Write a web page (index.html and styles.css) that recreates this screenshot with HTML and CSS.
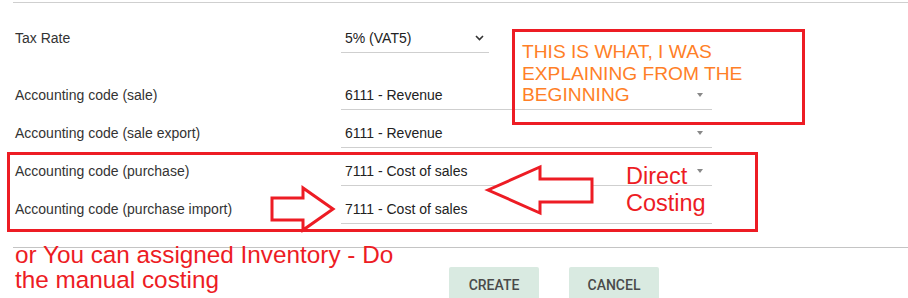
FILE: index.html
```html
<!DOCTYPE html>
<html lang="en">
<head>
    <meta charset="UTF-8">
    <title>Product accounting</title>
    <link rel="stylesheet" href="styles.css">
</head>
<body>
<div id="page">
    <div class="divider top"></div>

    <div class="form">
        <div class="row tax">
            <div class="label">Tax Rate</div>
            <div class="field short">
                <span>5% (VAT5)</span>
                <svg class="chevron" width="9" height="6" viewBox="0 0 9 6"><path d="M1 1 L4.5 4.5 L8 1" fill="none" stroke="#333" stroke-width="1.6"/></svg>
            </div>
        </div>
        <div class="row">
            <div class="label">Accounting code (sale)</div>
            <div class="field"><span>6111 - Revenue</span><i class="caret"></i></div>
        </div>
        <div class="row">
            <div class="label">Accounting code (sale export)</div>
            <div class="field"><span>6111 - Revenue</span><i class="caret"></i></div>
        </div>
        <div class="row">
            <div class="label">Accounting code (purchase)</div>
            <div class="field"><span>7111 - Cost of sales</span><i class="caret"></i></div>
        </div>
        <div class="row">
            <div class="label">Accounting code (purchase import)</div>
            <div class="field"><span>7111 - Cost of sales</span></div>
        </div>
    </div>

    <div class="divider bottom"></div>

    <div class="actions">
        <button class="flatButton">Create</button>
        <button class="flatButton">Cancel</button>
    </div>

    <!-- annotations drawn over the screenshot -->
    <div class="markBox note"></div>
    <p class="noteText orange">THIS IS WHAT, I WAS<br>EXPLAINING FROM THE<br>BEGINNING</p>
    <div class="markBox purchase"></div>
    <svg class="arrows" width="908" height="298" viewBox="0 0 908 298">
        <polygon points="272,198 303,198 303,188 333,209 303,230 303,220 272,220" fill="#fff" stroke="#ed1c24" stroke-width="3"/>
        <polygon points="488,190 540,167 540,179 592,179 592,202 540,202 540,213" fill="#fff" stroke="#ed1c24" stroke-width="3"/>
    </svg>
    <p class="noteText direct">Direct<br>Costing</p>
    <p class="noteText manual">or You can assigned Inventory - Do<br>the manual costing</p>
</div>
</body>
</html>
```

FILE: styles.css
```css
body {
    margin: 0;
    padding: 0;
    background-color: #fff;
    font-family: 'Liberation Sans', Arial, sans-serif;
    font-size: 14px;
    color: #333;
}

#page {
    position: relative;
    width: 908px;
    height: 298px;
    overflow: hidden;
}

.divider {
    margin-left: 13px;
    border-top: 1px solid #cfcfcf;
}

.divider.top {
    margin-top: 2px;
}

.divider.bottom {
    margin-top: 23px;
    border-top-color: #c4c4c4;
}

.form {
    padding-left: 15px;
}

.row {
    display: flex;
    align-items: flex-end;
    height: 38px;
}

.row.tax {
    margin-top: 12px;
    margin-bottom: 19px;
}

.label {
    width: 326px;
    line-height: 28px;
    padding-bottom: 1px;
}

.field {
    width: 367px;
    height: 28px;
    line-height: 28px;
    padding-left: 4px;
    border-bottom: 1px solid #cfcfcf;
    display: flex;
    align-items: center;
    justify-content: space-between;
    color: #222;
}

.field.short {
    width: 144px;
}

.chevron {
    margin-right: 5px;
    margin-top: -1px;
}

.caret {
    width: 0;
    height: 0;
    margin-right: 9px;
    border-left: 3px solid transparent;
    border-right: 3px solid transparent;
    border-top: 4px solid #888;
}

.actions {
    display: flex;
    gap: 30px;
    padding-left: 449px;
    margin-top: 19px;
}

.flatButton {
    width: 90px;
    height: 36px;
    line-height: 33px;
    padding: 0;
    border: none;
    border-radius: 2px;
    background-color: #d9eae1;
    color: #4a4a4a;
    font-family: Roboto, 'Liberation Sans', sans-serif;
    font-weight: 500;
    font-size: 14px;
    text-transform: uppercase;
}

/* paint annotations */
.markBox {
    position: absolute;
    border: 3px solid #ed1c24;
}

.markBox.note {
    left: 512px;
    top: 29px;
    width: 287px;
    height: 90px;
}

.markBox.purchase {
    left: 7px;
    top: 152px;
    width: 745px;
    height: 74px;
}

.arrows {
    position: absolute;
    left: 0;
    top: 0;
}

.noteText {
    position: absolute;
    margin: 0;
    font-family: 'Liberation Sans', Arial, sans-serif;
    white-space: nowrap;
}

.noteText.orange {
    left: 522px;
    top: 41px;
    font-size: 19.2px;
    line-height: 21.5px;
    color: #ff7f27;
}

.noteText.direct {
    left: 626px;
    top: 163px;
    font-size: 23.5px;
    line-height: 27px;
    color: #ed1c24;
}

.noteText.manual {
    left: 15px;
    top: 242px;
    font-size: 24.3px;
    line-height: 25px;
    color: #ed1c24;
}
```
